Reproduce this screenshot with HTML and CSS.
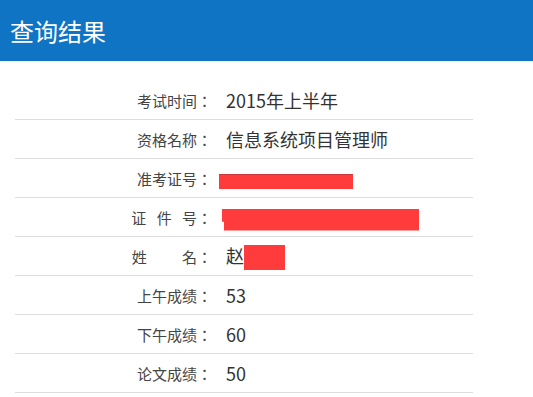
FILE: index.html
```html
<!DOCTYPE html>
<html lang="zh-CN">
<head>
    <meta charset="UTF-8">
    <meta name="viewport" content="width=device-width, initial-scale=1.0">
    <title>查询结果</title>
    <link rel="stylesheet" href="styles.css">
</head>
<body>
    <div class="header">查询结果</div>
    <table class="result">
        <tr>
            <td class="label" lang="zh-TW">考试时间：</td>
            <td class="value">2015年上半年</td>
        </tr>
        <tr>
            <td class="label" lang="zh-TW">资格名称：</td>
            <td class="value">信息系统项目管理师</td>
        </tr>
        <tr>
            <td class="label" lang="zh-TW">准考证号：</td>
            <td class="value"><span class="mask mask-ticket"></span></td>
        </tr>
        <tr>
            <td class="label spaced" lang="zh-TW">证 件 号：</td>
            <td class="value"><span class="mask mask-id"></span></td>
        </tr>
        <tr>
            <td class="label spaced-wide" lang="zh-TW">姓 名：</td>
            <td class="value">赵<span class="mask mask-name"></span></td>
        </tr>
        <tr>
            <td class="label" lang="zh-TW">上午成绩：</td>
            <td class="value">53</td>
        </tr>
        <tr>
            <td class="label" lang="zh-TW">下午成绩：</td>
            <td class="value">60</td>
        </tr>
        <tr>
            <td class="label" lang="zh-TW">论文成绩：</td>
            <td class="value">50</td>
        </tr>
    </table>
</body>
</html>
```

FILE: styles.css
```css
body {
    font-family: "Noto Sans CJK SC", "Liberation Sans", sans-serif;
    background-color: #ffffff;
    margin: 0;
    padding: 0;
}
.header {
    height: 61px;
    line-height: 61px;
    padding-left: 10px;
    background-color: #1074c4;
    color: #ffffff;
    font-size: 24px;
}
.result {
    width: 458px;
    margin: 20px 0 0 15px;
    border-collapse: collapse;
}
.result td {
    height: 38px;
    padding: 0;
    border-bottom: 1px solid #dddddd;
}
.label {
    width: 197px;
    text-align: right;
    color: #444444;
    font-family: "Noto Sans CJK TC", "Noto Sans CJK SC", sans-serif; /* 冒号居中 */
    font-size: 15px;
}
.spaced {
    word-spacing: 7px;
}
.spaced-wide {
    word-spacing: 32px;
}
.value {
    padding-left: 14px !important;
    color: #333333;
    font-size: 18px;
}
.mask {
    display: inline-block;
    vertical-align: middle;
    background-color: #ff3b3b;
}
.mask-ticket {
    width: 134px;
    height: 14px;
    margin-left: -7px;
    border-top: 1px solid #c93a3a;
}
.mask-id {
    width: 197px;
    height: 22px;
    margin-left: -4px;
    clip-path: polygon(0 0, 100% 0, 100% 100%, 2px 100%, 2px 60%, 0 60%);
}
.mask-name {
    width: 41px;
    height: 25px;
}
```
